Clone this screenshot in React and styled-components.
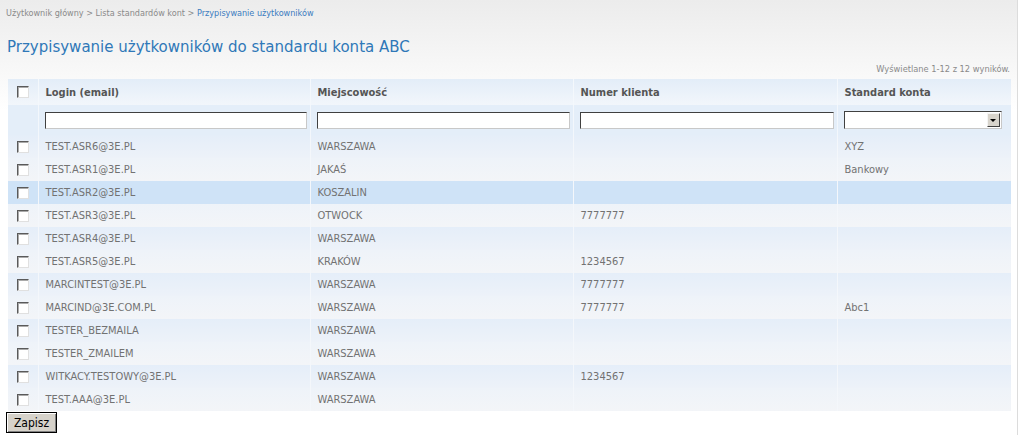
import styled, { createGlobalStyle } from "styled-components";

const GlobalStyle = createGlobalStyle`
  html, body { margin: 0; padding: 0; background: #fff; }
  body { font-family: "DejaVu Sans Condensed", "DejaVu Sans", sans-serif; }
`;

const rows = [
  { login: "TEST.ASR6@3E.PL", city: "WARSZAWA", num: "", std: "XYZ" },
  { login: "TEST.ASR1@3E.PL", city: "JAKAŚ", num: "", std: "Bankowy" },
  { login: "TEST.ASR2@3E.PL", city: "KOSZALIN", num: "", std: "", hover: true },
  { login: "TEST.ASR3@3E.PL", city: "OTWOCK", num: "7777777", std: "" },
  { login: "TEST.ASR4@3E.PL", city: "WARSZAWA", num: "", std: "" },
  { login: "TEST.ASR5@3E.PL", city: "KRAKÓW", num: "1234567", std: "" },
  { login: "MARCINTEST@3E.PL", city: "WARSZAWA", num: "7777777", std: "" },
  { login: "MARCIND@3E.COM.PL", city: "WARSZAWA", num: "7777777", std: "Abc1" },
  { login: "TESTER_BEZMAILA", city: "WARSZAWA", num: "", std: "" },
  { login: "TESTER_ZMAILEM", city: "WARSZAWA", num: "", std: "" },
  { login: "WITKACY.TESTOWY@3E.PL", city: "WARSZAWA", num: "1234567", std: "" },
  { login: "TEST.AAA@3E.PL", city: "WARSZAWA", num: "", std: "" },
];

const font = `"DejaVu Sans Condensed", "DejaVu Sans", sans-serif`;

const Page = styled.div`
  width: 1018px;
  min-height: 435px;
  border-right: 1px solid #dcdcdc;
  background: linear-gradient(#ececec 0px, #f6f6f6 60px, #ffffff 110px, #ffffff 100%);
  padding: 0 7px 0 6px;
  box-sizing: border-box;
  font-family: ${font};
`;

const Breadcrumb = styled.div`
  font-size: 9px;
  color: #8a8a8a;
  padding-top: 7px;
  height: 15px;
  line-height: 13px;
`;

const Crumb = styled.span`
  color: ${(p) => (p.$active ? "#3b7cc0" : "#8a8a8a")};
`;

const Title = styled.h1`
  margin: 13px 0 0 1px;
  font-size: 16.7px;
  font-weight: normal;
  color: #2f78b8;
  line-height: 22px;
`;

const Info = styled.div`
  text-align: right;
  font-size: 9.2px;
  color: #8a8a8a;
  margin-top: 5px;
  height: 14px;
  line-height: 14px;
`;

const Table = styled.table`
  width: 1003px;
  margin-left: 2px;
  border-collapse: collapse;
  table-layout: fixed;
  margin-top: 3px;
`;

const HeadRow = styled.tr`
  height: 26px;
  background: linear-gradient(#e3edf8, #f2f6fb);
`;

const Th = styled.th`
  text-align: left;
  font-size: 11px;
  font-weight: bold;
  color: #555;
  padding: 0 0 0 ${(p) => (p.$check ? "9px" : "7px")};
  border-left: ${(p) => (p.$first ? "none" : "1px solid #f4f8fc")};
`;

const FilterRow = styled.tr`
  height: 30px;
  background: #e4eef9;
`;

const FilterCell = styled.td`
  padding: 0 3px 0 6px;
  border-left: ${(p) => (p.$first ? "none" : "1px solid #f3f7fc")};
  vertical-align: middle;
`;

const TextInput = styled.input`
  display: block;
  width: 100%;
  height: 17px;
  box-sizing: border-box;
  border: 1px solid;
  border-color: #404040 #c8c8c8 #c8c8c8 #404040;
  background: #fff;
  padding: 0;
  margin: 0;
`;

const FakeSelect = styled.div`
  display: flex;
  height: 18px;
  width: 158px;
  box-sizing: border-box;
  border: 1px solid;
  border-color: #404040 #c8c8c8 #c8c8c8 #404040;
  background: #fff;
  justify-content: flex-end;
  padding: 1px;
`;

const SelectButton = styled.div`
  width: 13px;
  height: 14px;
  background: #d8d4cc;
  border: 1px solid;
  border-color: #f4f4f4 #404040 #404040 #f4f4f4;
  box-sizing: border-box;
  display: flex;
  align-items: center;
  justify-content: center;
`;

const Arrow = styled.div`
  width: 0;
  height: 0;
  border-left: 3px solid transparent;
  border-right: 3px solid transparent;
  border-top: 3px solid #000;
`;

const Row = styled.tr`
  height: 23px;
  background: ${(p) =>
    p.$hover
      ? "#cfe3f7"
      : p.$odd
      ? "linear-gradient(#e5eef9, #edf2f9)"
      : "linear-gradient(#eef3f9, #f3f5f8)"};
`;

const Td = styled.td`
  font-size: 11px;
  color: #727272;
  padding: 0 0 0 ${(p) => (p.$check ? "9px" : "7px")};
  border-left: ${(p) => (p.$first ? "none" : "1px solid #f4f7fb")};
  white-space: nowrap;
  overflow: hidden;
`;

const Check = styled.span`
  display: block;
  width: 10px;
  height: 10px;
  background: #fff;
  border: 1px solid;
  border-color: #5a5a5a #e0e0e0 #e0e0e0 #5a5a5a;
  box-shadow: inset 1px 1px 0 #aaa;
`;

const Button = styled.button`
  margin-top: 1px;
  font-family: ${font};
  font-size: 12px;
  color: #000;
  background: #d6d2ca;
  border: 1px solid #000;
  box-shadow: inset 1px 1px 0 #fff, inset -1px -1px 0 #808080;
  padding: 0;
  height: 21px;
  width: 51px;
`;

export default function App() {
  return (
    <>
      <GlobalStyle />
      <Page>
        <Breadcrumb>
          <Crumb>Użytkownik główny</Crumb> &gt; <Crumb>Lista standardów kont</Crumb> &gt;{" "}
          <Crumb $active>Przypisywanie użytkowników</Crumb>
        </Breadcrumb>
        <Title>Przypisywanie użytkowników do standardu konta ABC</Title>
        <Info>Wyświetlane 1-12 z 12 wyników.</Info>
        <Table>
          <colgroup>
            <col style={{ width: 30 }} />
            <col style={{ width: 272 }} />
            <col style={{ width: 263 }} />
            <col style={{ width: 264 }} />
            <col style={{ width: 174 }} />
          </colgroup>
          <thead>
            <HeadRow>
              <Th $check $first>
                <Check />
              </Th>
              <Th>Login (email)</Th>
              <Th>Miejscowość</Th>
              <Th>Numer klienta</Th>
              <Th>Standard konta</Th>
            </HeadRow>
            <FilterRow>
              <FilterCell $first />
              <FilterCell>
                <TextInput />
              </FilterCell>
              <FilterCell>
                <TextInput />
              </FilterCell>
              <FilterCell>
                <TextInput />
              </FilterCell>
              <FilterCell>
                <FakeSelect>
                  <SelectButton>
                    <Arrow />
                  </SelectButton>
                </FakeSelect>
              </FilterCell>
            </FilterRow>
          </thead>
          <tbody>
            {rows.map((r, i) => (
              <Row key={i} $odd={i % 2 === 0} $hover={r.hover}>
                <Td $check $first>
                  <Check />
                </Td>
                <Td>{r.login}</Td>
                <Td>{r.city}</Td>
                <Td>{r.num}</Td>
                <Td>{r.std}</Td>
              </Row>
            ))}
          </tbody>
        </Table>
        <Button>Zapisz</Button>
      </Page>
    </>
  );
}
